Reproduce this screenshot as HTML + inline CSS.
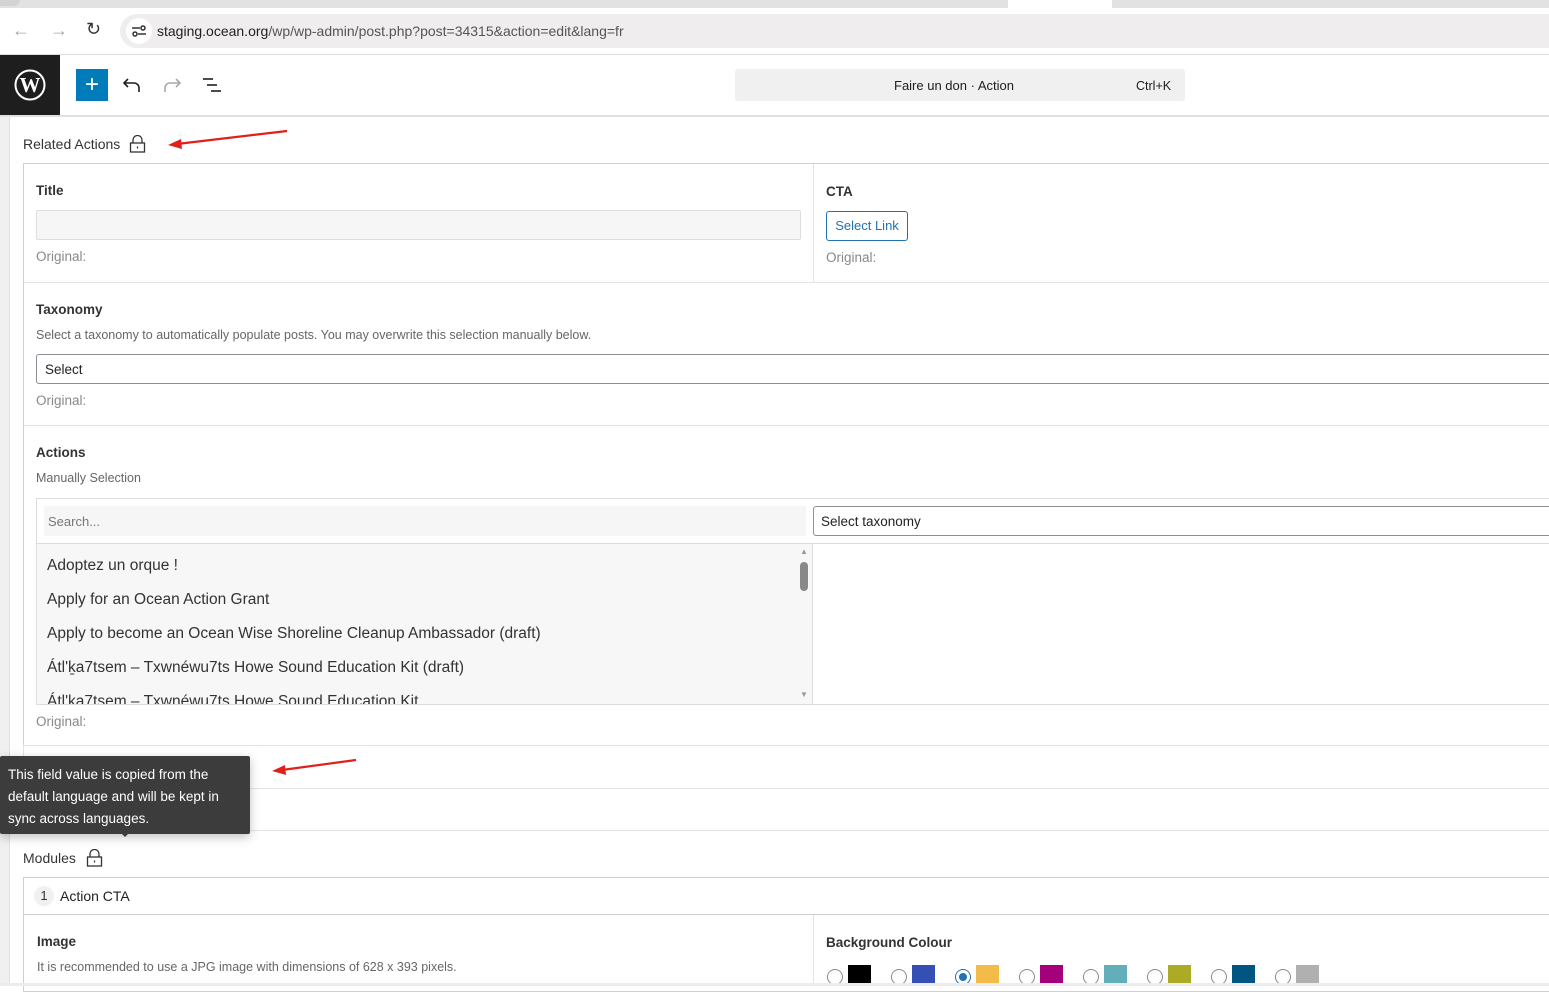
<!DOCTYPE html>
<html><head><meta charset="utf-8"><style>
*{box-sizing:border-box;margin:0;padding:0}
body{width:1549px;height:986px;overflow:hidden;background:#fff;font-family:"Liberation Sans",sans-serif;color:#1e1e1e;position:relative;font-size:13px}
.a{position:absolute}
.lbl{font-size:13.5px;font-weight:bold;color:#333}
.orig{font-size:13.5px;color:#888}
.desc{font-size:12.5px;color:#666}
.hl{position:absolute;height:1px;background:#e2e4e7}
.vl{position:absolute;width:1px;background:#e2e4e7}
.item{position:absolute;left:47px;font-size:15.5px;color:#333}
.radio{position:absolute;width:16px;height:16px;border:1px solid #888;border-radius:50%;background:#fff}
.sw{position:absolute;width:23px;height:18px}
</style></head><body>
<!-- browser chrome -->
<div class="a" style="left:0;top:0;width:1549px;height:8px;background:#e2e2e2"></div>
<div class="a" style="left:1008px;top:0;width:104px;height:8px;background:#fff"></div>
<div class="a" style="left:0;top:0;width:20px;height:6px;background:#d3d3d3;border-radius:0 0 6px 0"></div>
<div class="a" style="left:12px;top:20px;font-size:18px;color:#aaa">&#8592;</div>
<div class="a" style="left:50px;top:20px;font-size:18px;color:#aaa">&#8594;</div>
<div class="a" style="left:86px;top:19px;font-size:18px;color:#333">&#8635;</div>
<div class="a" style="left:120px;top:14px;width:1429px;height:34px;background:#efedee;border-radius:17px 0 0 17px"></div>
<div class="a" style="left:126px;top:18px;width:26px;height:26px;background:#fff;border-radius:50%"></div>
<svg class="a" style="left:131px;top:24px" width="16" height="14" viewBox="0 0 16 14"><g stroke="#333" stroke-width="1.5" fill="none"><line x1="1" y1="4" x2="9" y2="4"/><circle cx="12" cy="4" r="2"/><line x1="7" y1="10" x2="15" y2="10"/><circle cx="4" cy="10" r="2"/></g></svg>
<div class="a" style="left:157px;top:23px;font-size:14px;color:#222">staging.ocean.org<span style="color:#555">/wp/wp-admin/post.php?post=34315&amp;action=edit&amp;lang=fr</span></div>
<div class="hl" style="left:0;top:54px;width:1549px;background:#ddd"></div>
<!-- WP header -->
<div class="a" style="left:0;top:55px;width:60px;height:60px;background:#1e1e1e"></div>
<svg class="a" style="left:14px;top:69px" width="32" height="32" viewBox="0 0 32 32"><circle cx="16" cy="16" r="14.5" fill="none" stroke="#fff" stroke-width="2"/><text x="16" y="23" text-anchor="middle" font-family="Liberation Serif" font-size="21" font-weight="bold" fill="#fff">W</text></svg>
<div class="a" style="left:76px;top:69px;width:32px;height:32px;background:#007cba;color:#fff;font-size:24px;text-align:center;line-height:31px">+</div>
<svg class="a" style="left:122px;top:76px" width="20" height="18" viewBox="0 0 20 18"><path d="M6 3 L2 7 L6 11 M2 7 H12 a5 5 0 0 1 5 5 V16" stroke="#1e1e1e" stroke-width="1.6" fill="none"/></svg>
<svg class="a" style="left:162px;top:76px" width="20" height="18" viewBox="0 0 20 18"><path d="M14 3 L18 7 L14 11 M18 7 H8 a5 5 0 0 0 -5 5 V16" stroke="#aaa" stroke-width="1.6" fill="none"/></svg>
<svg class="a" style="left:202px;top:77px" width="20" height="16" viewBox="0 0 20 16"><g stroke="#1e1e1e" stroke-width="1.6"><line x1="1" y1="2" x2="11" y2="2"/><line x1="5" y1="8" x2="15" y2="8"/><line x1="9" y1="14" x2="19" y2="14"/></g></svg>
<div class="a" style="left:735px;top:69px;width:450px;height:32px;background:#f0f0f0;border-radius:3px"></div>
<div class="a" style="left:894px;top:78px;font-size:13px;color:#1e1e1e">Faire un don · Action</div>
<div class="a" style="left:1136px;top:79px;font-size:12.5px;color:#1e1e1e">Ctrl+K</div>
<div class="hl" style="left:0;top:115px;width:1549px;height:2px;background:#e0e0e0"></div>
<!-- gutter -->
<div class="a" style="left:0;top:117px;width:10px;height:869px;background:#f0f0f1;border-right:1px solid #e0e0e0"></div>
<!-- Related Actions -->
<div class="a lbl" style="left:23px;top:136px;font-weight:normal;font-size:14px;color:#333">Related Actions</div>
<svg class="a" style="left:129px;top:135px" width="17" height="18" viewBox="0 0 17 18"><path d="M4 8 V5 a4.5 4.5 0 0 1 9 0 V8" stroke="#333" stroke-width="1.3" fill="none"/><rect x="1.5" y="8" width="14" height="9" stroke="#333" stroke-width="1.3" fill="none"/><line x1="8.5" y1="11.5" x2="8.5" y2="13.5" stroke="#333" stroke-width="1.3"/></svg>
<svg class="a" style="left:165px;top:125px" width="130" height="25"><line x1="122" y1="6" x2="12" y2="19" stroke="#e0201a" stroke-width="2.2"/><polygon points="3,20 16,14 17,24" fill="#e0201a"/></svg>
<!-- main box -->
<div class="a" style="left:23px;top:163px;width:1530px;height:583px;border:1px solid #ccd0d4;border-right:none"></div>
<div class="vl" style="left:813px;top:164px;height:118px"></div>
<div class="a lbl" style="left:36px;top:183px">Title</div>
<div class="a" style="left:36px;top:210px;width:765px;height:30px;background:#f5f6f5;border:1px solid #ddd;border-radius:2px"></div>
<div class="a orig" style="left:36px;top:249px">Original:</div>
<div class="a lbl" style="left:826px;top:184px">CTA</div>
<div class="a" style="left:826px;top:211px;width:82px;height:30px;border:1px solid #2271b1;border-radius:3px;color:#2271b1;font-size:13px;text-align:center;line-height:28px">Select Link</div>
<div class="a orig" style="left:826px;top:250px">Original:</div>
<div class="hl" style="left:24px;top:282px;width:1525px"></div>
<div class="a lbl" style="left:36px;top:302px">Taxonomy</div>
<div class="a desc" style="left:36px;top:328px">Select a taxonomy to automatically populate posts. You may overwrite this selection manually below.</div>
<div class="a" style="left:36px;top:354px;width:1520px;height:30px;border:1px solid #8c8f94;border-radius:3px"></div>
<div class="a" style="left:45px;top:362px;font-size:13.5px;color:#222">Select</div>
<div class="a orig" style="left:36px;top:393px">Original:</div>
<div class="hl" style="left:24px;top:425px;width:1525px"></div>
<div class="a lbl" style="left:36px;top:445px">Actions</div>
<div class="a desc" style="left:36px;top:471px">Manually Selection</div>
<div class="a" style="left:36px;top:498px;width:1520px;height:207px;border:1px solid #ddd"></div>
<div class="a" style="left:44px;top:506px;width:762px;height:30px;background:#f5f6f5"></div>
<div class="a" style="left:48px;top:514px;font-size:13px;color:#777">Search...</div>
<div class="a" style="left:813px;top:506px;width:740px;height:30px;border:1px solid #8c8f94;border-radius:3px"></div>
<div class="a" style="left:821px;top:514px;font-size:13.5px;color:#222">Select taxonomy</div>
<div class="hl" style="left:37px;top:543px;width:1512px;background:#ddd"></div>
<div class="a" style="left:37px;top:544px;width:760px;height:160px;background:#f7f7f7;overflow:hidden">
</div>
<div class="vl" style="left:812px;top:544px;height:160px;background:#ddd"></div>
<div class="item" style="top:557px">Adoptez un orque !</div>
<div class="item" style="top:591px">Apply for an Ocean Action Grant</div>
<div class="item" style="top:625px">Apply to become an Ocean Wise Shoreline Cleanup Ambassador (draft)</div>
<div class="item" style="top:659px">Átl'ḵa7tsem – Txwnéwu7ts Howe Sound Education Kit (draft)</div>
<div class="a" style="left:37px;top:690px;width:760px;height:14px;overflow:hidden"><div style="position:absolute;left:10px;top:3px;font-size:15.5px;color:#333">Átl'ḵa7tsem – Txwnéwu7ts Howe Sound Education Kit</div></div>
<div class="a" style="left:797px;top:544px;width:15px;height:160px;background:#f7f7f7"></div>
<div class="a" style="left:800px;top:547px;font-size:8px;color:#999">▲</div>
<div class="a" style="left:800px;top:690px;font-size:8px;color:#999">▼</div>
<div class="a" style="left:800px;top:562px;width:8px;height:29px;background:#888;border-radius:4px"></div>
<div class="a orig" style="left:36px;top:714px">Original:</div>
<!-- block options rows -->
<div class="a" style="left:23px;top:745px;width:1530px;height:86px;border:1px solid #e2e4e7;border-right:none"></div>
<div class="hl" style="left:24px;top:788px;width:1525px"></div>
<div class="a lbl" style="left:36px;top:760px">Block Options</div>
<div class="a orig" style="left:23px;top:798px;color:#555">Original:</div>
<svg class="a" style="left:270px;top:757px" width="90" height="20"><line x1="86" y1="3" x2="12" y2="13" stroke="#e0201a" stroke-width="2.2"/><polygon points="2,14 15,8 16,18" fill="#e0201a"/></svg>
<!-- tooltip -->
<div class="a" style="left:0;top:756px;width:250px;height:78px;background:#3c3c3c;border-radius:2px;box-shadow:0 3px 10px rgba(0,0,0,.25)"></div>
<div class="a" style="left:120px;top:832px;width:0;height:0;border-left:5px solid transparent;border-right:5px solid transparent;border-top:5px solid #3c3c3c"></div>
<div class="a" style="left:8px;top:764px;width:240px;color:#fff;font-size:13.5px;line-height:22px">This field value is copied from the default language and will be kept in sync across languages.</div>
<!-- modules -->
<div class="a" style="left:23px;top:850px;font-size:14px;color:#333">Modules</div>
<svg class="a" style="left:86px;top:849px" width="17" height="18" viewBox="0 0 17 18"><path d="M4 8 V5 a4.5 4.5 0 0 1 9 0 V8" stroke="#333" stroke-width="1.3" fill="none"/><rect x="1.5" y="8" width="14" height="9" stroke="#333" stroke-width="1.3" fill="none"/><line x1="8.5" y1="11.5" x2="8.5" y2="13.5" stroke="#333" stroke-width="1.3"/></svg>
<div class="a" style="left:23px;top:877px;width:1530px;height:115px;border:1px solid #ccd0d4;border-right:none"></div>
<div class="hl" style="left:24px;top:914px;width:1525px;background:#ccd0d4"></div>
<div class="a" style="left:34px;top:886px;width:20px;height:20px;background:#f0f0f0;border-radius:50%;text-align:center;line-height:20px;font-size:13px;color:#333">1</div>
<div class="a" style="left:60px;top:888px;font-size:14px;color:#222">Action CTA</div>
<div class="vl" style="left:813px;top:915px;height:71px"></div>
<div class="a lbl" style="left:37px;top:934px">Image</div>
<div class="a desc" style="left:37px;top:960px">It is recommended to use a JPG image with dimensions of 628 x 393 pixels.</div>
<div class="a lbl" style="left:826px;top:935px">Background Colour</div>
<div class="radio" style="left:827px;top:969px"></div><div class="sw" style="left:848px;top:965px;background:#000"></div>
<div class="radio" style="left:891px;top:969px"></div><div class="sw" style="left:912px;top:965px;background:#354fb4"></div>
<div class="radio" style="left:955px;top:969px;border-color:#2271b1"><div style="position:absolute;left:3px;top:3px;width:8px;height:8px;border-radius:50%;background:#2271b1"></div></div><div class="sw" style="left:976px;top:965px;background:#f3bc4a"></div>
<div class="radio" style="left:1019px;top:969px"></div><div class="sw" style="left:1040px;top:965px;background:#a5007b"></div>
<div class="radio" style="left:1083px;top:969px"></div><div class="sw" style="left:1104px;top:965px;background:#62afba"></div>
<div class="radio" style="left:1147px;top:969px"></div><div class="sw" style="left:1168px;top:965px;background:#abab25"></div>
<div class="radio" style="left:1211px;top:969px"></div><div class="sw" style="left:1232px;top:965px;background:#005680"></div>
<div class="radio" style="left:1275px;top:969px"></div><div class="sw" style="left:1296px;top:965px;background:#b0b0b0"></div>
<div class="hl" style="left:0;top:983px;width:1549px;height:3px;background:#ececec"></div>
</body></html>
